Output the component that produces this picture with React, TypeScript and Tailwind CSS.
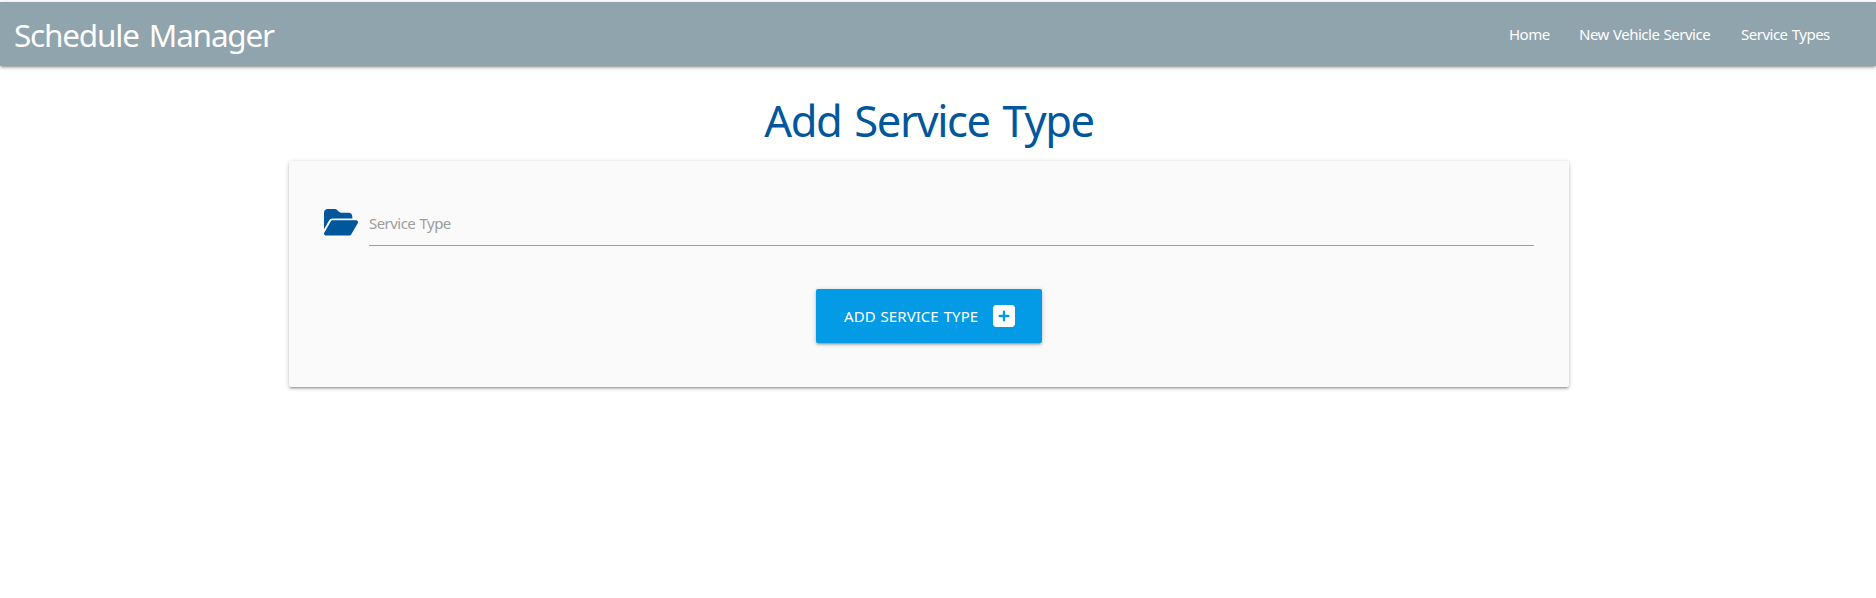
import React from "react";

const links = [
  { label: "Home", cls: "w-[40px]" },
  { label: "New Vehicle Service", cls: "w-[132px]" },
  { label: "Service Types", cls: "w-[89px]" },
];

function FolderOpenIcon() {
  return (
    <svg viewBox="0 32 576 448" className="h-[26.5px] w-[34px] fill-[#01579b]" aria-hidden="true">
      <path d="M88.7 223.8L0 375.8V96C0 60.7 28.7 32 64 32H181.5c17 0 33.3 6.7 45.3 18.7l26.5 26.5c12 12 28.3 18.7 45.3 18.7H416c35.3 0 64 28.7 64 64v32H144c-22.8 0-43.8 12.1-55.3 31.8zm27.6 16.1C122.1 230 132.7 224 144 224H544c11.5 0 22 6.1 27.7 16.1s5.7 22.2-.1 32.1l-112 192C453.9 474 443.3 480 432 480H32c-11.5 0-22-6.1-27.7-16.1s-5.7-22.2 .1-32.1l112-192z" />
    </svg>
  );
}

function SquarePlusIcon() {
  return (
    <svg viewBox="0 32 448 448" className="size-[22px] fill-white" aria-hidden="true">
      <path d="M64 32C28.7 32 0 60.7 0 96V416c0 35.3 28.7 64 64 64H384c35.3 0 64-28.7 64-64V96c0-35.3-28.7-64-64-64H64zM200 344V280H136c-13.3 0-24-10.7-24-24s10.7-24 24-24h64V168c0-13.3 10.7-24 24-24s24 10.7 24 24v64h64c13.3 0 24 10.7 24 24s-10.7 24-24 24H248v64c0 13.3-10.7 24-24 24s-24-10.7-24-24z" />
    </svg>
  );
}

export default function App() {
  return (
    <div className="min-h-[598px] bg-white pt-[2px] font-['Noto_Sans','Open_Sans',sans-serif] text-[15px]">
      <nav className="flex h-16 items-center justify-between bg-[#90a4ae] pr-[46px] pl-[14px] text-white shadow-[0_2px_2px_0_rgba(0,0,0,0.14),0_3px_1px_-2px_rgba(0,0,0,0.12),0_1px_5px_0_rgba(0,0,0,0.2)]">
        <a href="#" className="pt-px text-[31.5px] tracking-[-1.2px] [word-spacing:3px] whitespace-nowrap">Schedule Manager</a>
        <ul className="flex gap-[30px]">
          {links.map((link) => (
            <li key={link.label} className={`whitespace-nowrap tracking-[-0.5px] [word-spacing:0.8px] ${link.cls}`}>
              <a href="#">{link.label}</a>
            </li>
          ))}
        </ul>
      </nav>
      <main className="ml-[289px] w-[1280px]">
        <h1 className="mt-[28px] h-[67px] text-center text-[43.5px] leading-[52px] tracking-[-1.4px] [word-spacing:3px] text-[#01579b]">
          Add Service Type
        </h1>
        <form className="h-[226px] rounded-[2px] bg-[#fafafa] px-[35px] shadow-[0_2px_2px_0_rgba(0,0,0,0.14),0_3px_1px_-2px_rgba(0,0,0,0.12),0_1px_5px_0_rgba(0,0,0,0.2)]">
          <div className="flex pt-[40px]">
            <div className="w-[45px] pt-[8px]">
              <FolderOpenIcon />
            </div>
            <input
              placeholder="Service Type"
              className="h-[45px] flex-1 border-b border-[#9e9e9e] bg-transparent tracking-[-0.55px] [word-spacing:1px] outline-none placeholder:text-[#9e9e9e]"
            />
          </div>
          <div className="flex justify-center pt-[43px]">
            <button
              type="button"
              className="flex h-[54px] w-[226px] items-center justify-between rounded-[2px] bg-[#039be5] pr-[27px] pl-[28px] text-[15px] tracking-[0.05px] [word-spacing:1px] whitespace-nowrap text-white uppercase shadow-[0_2px_2px_0_rgba(0,0,0,0.14),0_3px_1px_-2px_rgba(0,0,0,0.12),0_1px_5px_0_rgba(0,0,0,0.2)]"
            >
              Add Service Type
              <SquarePlusIcon />
            </button>
          </div>
        </form>
      </main>
    </div>
  );
}
